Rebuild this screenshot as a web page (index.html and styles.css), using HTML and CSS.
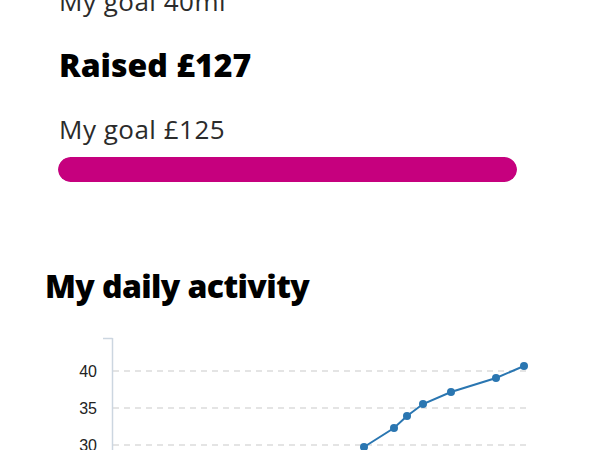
FILE: index.html
```html
<!DOCTYPE html>
<html lang="en">
<head>
<meta charset="utf-8">
<title>My fundraising</title>
<link rel="stylesheet" href="styles.css">
</head>
<body>
<main class="page">
  <section class="goals">
    <p class="goal">My goal 40mi</p>
    <p class="raised">Raised £127</p>
    <p class="goal goal-money">My goal £125</p>
    <div class="bar"><div class="bar-fill" style="width:100%"></div></div>
  </section>
  <section class="activity">
    <h2 class="activity-title">My daily activity</h2>
    <svg class="chart" width="600" height="120" viewBox="0 0 600 120" aria-label="Daily activity chart">
      <g class="grid">
        <line x1="113" y1="41" x2="528" y2="41"/>
        <line x1="113" y1="78" x2="528" y2="78"/>
        <line x1="113" y1="115" x2="528" y2="115"/>
      </g>
      <g class="axis">
        <line x1="112.5" y1="8" x2="112.5" y2="120"/>
        <line x1="103" y1="8.5" x2="112.5" y2="8.5"/>
      </g>
      <g class="labels">
        <text x="97" y="46.5">40</text>
        <text x="97" y="83.5">35</text>
        <text x="97" y="120.5">30</text>
      </g>
      <polyline class="series" points="364,117 394,98 407,86 423,74 451,62 496,48 524,36"/>
      <g class="dots">
        <circle cx="364" cy="117" r="4"/>
        <circle cx="394" cy="98" r="4"/>
        <circle cx="407" cy="86" r="4"/>
        <circle cx="423" cy="74" r="4"/>
        <circle cx="451" cy="62" r="4"/>
        <circle cx="496" cy="48" r="4"/>
        <circle cx="524" cy="36" r="4"/>
      </g>
    </svg>
  </section>
</main>
</body>
</html>
```
FILE: styles.css
```css
html, body {
  margin: 0;
  padding: 0;
  background: #fff;
}
body {
  font-family: "Open Sans", Lato, sans-serif;
  color: #222;
  overflow: hidden;
}
.page {
  margin-top: -14px;
}
.goals {
  padding-left: 59px;
  display: flex;
  flex-direction: column;
}
.goal {
  margin: 0;
  font-size: 26px;
  line-height: 30px;
  color: #2b2b2b;
  letter-spacing: 0.5px;
}
.raised {
  margin: 31px 0 0;
  font-size: 32px;
  line-height: 36px;
  font-weight: 800;
  color: #000;
  letter-spacing: 0;
}
.goal-money {
  margin-top: 31px;
}
.bar {
  margin-top: 13px;
  margin-left: -1px;
  width: 459px;
  height: 25px;
  border-radius: 12.5px;
  background: #eee;
  overflow: hidden;
}
.bar-fill {
  height: 100%;
  background: #c6007e;
  border-radius: 12.5px;
}
.activity {
  margin-top: 84px;
}
.activity-title {
  margin: 0 0 24px 45px;
  font-size: 32px;
  line-height: 40px;
  font-weight: 800;
  color: #000;
  letter-spacing: -0.6px;
}
.chart {
  display: block;
}
.grid line {
  stroke: #dcdcdc;
  stroke-width: 1.5;
  stroke-dasharray: 6 5;
}
.axis line {
  stroke: #ccd6e0;
  stroke-width: 1.5;
}
.labels text {
  font-family: "Liberation Sans", Arial, sans-serif;
  font-size: 16px;
  fill: #222;
  text-anchor: end;
}
.series {
  fill: none;
  stroke: #2a76b1;
  stroke-width: 2;
}
.dots circle {
  fill: #2a76b1;
}
```
